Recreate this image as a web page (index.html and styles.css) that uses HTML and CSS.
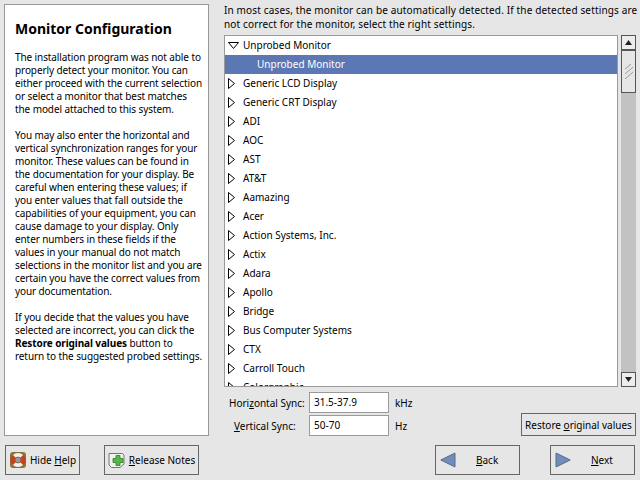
FILE: index.html
```html
<!DOCTYPE html>
<html lang="en">
<head>
<meta charset="utf-8">
<title>Monitor Configuration</title>
<link rel="stylesheet" href="styles.css">
</head>
<body>
<main class="main">
  <aside class="help">
    <h1>Monitor Configuration</h1>
    <p>The installation program was not able to<br>properly detect your monitor. You can<br>either proceed with the current selection<br>or select a monitor that best matches<br>the model attached to this system.</p>
    <p>You may also enter the horizontal and<br>vertical synchronization ranges for your<br>monitor. These values can be found in<br>the documentation for your display. Be<br>careful when entering these values; if<br>you enter values that fall outside the<br>capabilities of your equipment, you can<br>cause damage to your display. Only<br>enter numbers in these fields if the<br>values in your manual do not match<br>selections in the monitor list and you are<br>certain you have the correct values from<br>your documentation.</p>
    <p>If you decide that the values you have<br>selected are incorrect, you can click the<br><b>Restore original values</b> button to<br>return to the suggested probed settings.</p>
  </aside>
  <section class="content">
    <p class="intro">In most cases, the monitor can be automatically detected. If the detected settings are<br>not correct for the monitor, select the right settings.</p>
    <div class="listwrap">
      <ul class="tree">
        <li class="row"><svg class="arrow" viewBox="0 0 11 7"><path d="M.5.500h10L5.500 6.500z"/></svg>Unprobed Monitor</li>
        <li class="row selected">Unprobed Monitor</li>
        <li class="row"><svg class="arrow closed" viewBox="0 0 7 11"><path d="M.5.500v10L6.500 5.500z"/></svg>Generic LCD Display</li>
        <li class="row"><svg class="arrow closed" viewBox="0 0 7 11"><path d="M.5.500v10L6.500 5.500z"/></svg>Generic CRT Display</li>
        <li class="row"><svg class="arrow closed" viewBox="0 0 7 11"><path d="M.5.500v10L6.500 5.500z"/></svg>ADI</li>
        <li class="row"><svg class="arrow closed" viewBox="0 0 7 11"><path d="M.5.500v10L6.500 5.500z"/></svg>AOC</li>
        <li class="row"><svg class="arrow closed" viewBox="0 0 7 11"><path d="M.5.500v10L6.500 5.500z"/></svg>AST</li>
        <li class="row"><svg class="arrow closed" viewBox="0 0 7 11"><path d="M.5.500v10L6.500 5.500z"/></svg>AT&amp;T</li>
        <li class="row"><svg class="arrow closed" viewBox="0 0 7 11"><path d="M.5.500v10L6.500 5.500z"/></svg>Aamazing</li>
        <li class="row"><svg class="arrow closed" viewBox="0 0 7 11"><path d="M.5.500v10L6.500 5.500z"/></svg>Acer</li>
        <li class="row"><svg class="arrow closed" viewBox="0 0 7 11"><path d="M.5.500v10L6.500 5.500z"/></svg>Action Systems, Inc.</li>
        <li class="row"><svg class="arrow closed" viewBox="0 0 7 11"><path d="M.5.500v10L6.500 5.500z"/></svg>Actix</li>
        <li class="row"><svg class="arrow closed" viewBox="0 0 7 11"><path d="M.5.500v10L6.500 5.500z"/></svg>Adara</li>
        <li class="row"><svg class="arrow closed" viewBox="0 0 7 11"><path d="M.5.500v10L6.500 5.500z"/></svg>Apollo</li>
        <li class="row"><svg class="arrow closed" viewBox="0 0 7 11"><path d="M.5.500v10L6.500 5.500z"/></svg>Bridge</li>
        <li class="row"><svg class="arrow closed" viewBox="0 0 7 11"><path d="M.5.500v10L6.500 5.500z"/></svg>Bus Computer Systems</li>
        <li class="row"><svg class="arrow closed" viewBox="0 0 7 11"><path d="M.5.500v10L6.500 5.500z"/></svg>CTX</li>
        <li class="row"><svg class="arrow closed" viewBox="0 0 7 11"><path d="M.5.500v10L6.500 5.500z"/></svg>Carroll Touch</li>
        <li class="row"><svg class="arrow closed" viewBox="0 0 7 11"><path d="M.5.500v10L6.500 5.500z"/></svg>Colorgraphic</li>
      </ul>
      <div class="scrollbar">
        <div class="step"><svg viewBox="0 0 7 5" class="tri"><path d="M3.5 0L7 5H0z"/></svg></div>
        <div class="track">
          <div class="thumb"><svg viewBox="0 0 8 16" class="grip"><path d="M0 5L6 0M0 10L8 3M0 15L8 8"/></svg></div>
        </div>
        <div class="step"><svg viewBox="0 0 7 5" class="tri"><path d="M3.5 5L7 0H0z"/></svg></div>
      </div>
    </div>
    <div class="syncarea">
      <div class="syncgrid">
        <label class="synclabel">Hori<u>z</u>ontal Sync:</label><div class="field">31.5-37.9</div><span class="unit">kHz</span>
        <label class="synclabel vert"><u>V</u>ertical Sync:</label><div class="field">50-70</div><span class="unit">Hz</span>
      </div>
      <button class="btn restore"><span>Restore <u>o</u>riginal values</span></button>
    </div>
  </section>
</main>
<footer class="footer">
  <button class="btn foot hide">
    <svg class="ic" viewBox="0 0 18 18"><rect x="1" y="1" width="16" height="16" rx="3" fill="#8a7a2e"/><circle cx="9" cy="9" r="7.500" fill="#f4f0ea" stroke="#5a3a20" stroke-width=".6"/><path d="M3.700 3.700L6.800 6.800A3.100 3.100 0 0 0 6.800 11.200L3.700 14.300A7.500 7.500 0 0 1 3.700 3.700zM14.300 3.700A7.500 7.500 0 0 1 14.300 14.300L11.200 11.200A3.100 3.100 0 0 0 11.200 6.800z" fill="#c8401c"/><circle cx="9" cy="9" r="3" fill="#9a9a92" stroke="#5a3a20" stroke-width=".6"/></svg>
    <span>Hide <u>H</u>elp</span>
  </button>
  <button class="btn foot notes">
    <svg class="ic" viewBox="0 0 18 18"><path d="M1 2.500h13.500l1.500 1.500V13L12 16.500H3.500L1 14z" fill="#f2f2ec" stroke="#77776f"/><path d="M8 4.500h4v3h3v4h-3v3H8v-3H5v-4h3z" fill="#57b84a" stroke="#2f7f2c" stroke-width=".8"/></svg>
    <span><u>R</u>elease Notes</span>
  </button>
  <div class="spacer"></div>
  <button class="btn nav">
    <svg class="navic" viewBox="0 0 16 16"><path d="M.8 8L15 1V15z" fill="#6f8dbd" stroke="#5a6a84"/></svg>
    <span class="navtxt"><u>B</u>ack</span>
  </button>
  <button class="btn nav next">
    <svg class="navic" viewBox="0 0 16 16"><path d="M15.200 8L1 1V15z" fill="#6f8dbd" stroke="#5a6a84"/></svg>
    <span class="navtxt"><u>N</u>ext</span>
  </button>
</footer>
</body>
</html>
```
FILE: styles.css
```css
* { box-sizing: border-box; }
html, body { margin: 0; padding: 0; }
body {
  width: 640px;
  height: 480px;
  overflow: hidden;
  background: #e6e6e6;
  color: #000;
  font-family: "Noto Sans", sans-serif;
  font-size: 10px;
  display: flex;
  flex-direction: column;
}
.main { display: flex; height: 436px; padding: 4px 4px 0 4px; }
.help {
  width: 205px;
  height: 432px;
  background: #fff;
  border: 1px solid #9a9a9a;
  padding: 15px 0 0 10px;
  white-space: nowrap;
}
.help h1 { margin: 0 0 13px; font-size: 14px; line-height: 18px; font-weight: bold; }
.help p { margin: 0 0 13px; line-height: 13px; letter-spacing: -.1px; }
.content { width: 412px; margin-left: 15px; display: flex; flex-direction: column; }
.intro { margin: -1px 0 0; height: 32px; line-height: 14px; white-space: nowrap; letter-spacing: .15px; }
.listwrap { display: flex; height: 352px; }
.tree {
  width: 394px;
  margin: 0;
  padding: 0;
  list-style: none;
  background: #fff;
  border: 1px solid #9a9a9a;
  overflow: hidden;
}
.row { height: 19px; line-height: 18px; padding: 0 0 1px 3px; display: flex; align-items: center; white-space: nowrap; }
.row.selected { background: #5b78b4; color: #fff; padding-left: 32px; }
.arrow { width: 11px; height: 7px; margin-right: 4px; fill: #fff; stroke: #000; stroke-width: 1; flex: none; }
.arrow.closed { width: 7px; height: 11px; margin-right: 8px; }
.scrollbar {
  width: 15px;
  margin-left: 3px;
  background: #c2c2c2;
  display: flex;
  flex-direction: column;
}
.step {
  height: 15px;
  background: #ececec;
  border: 1px solid #555;
  display: flex;
  align-items: center;
  justify-content: center;
}
.tri { width: 7px; height: 5px; fill: #222; }
.track { flex: 1; }
.thumb {
  height: 43px;
  background: #e6e6e6;
  border: 1px solid #555;
  display: flex;
  align-items: center;
  justify-content: center;
}
.grip { width: 8px; height: 16px; stroke: #999; stroke-width: 1; fill: none; }
.syncarea { flex: 1; display: flex; align-items: flex-end; justify-content: space-between; padding-top: 5px; }
.syncgrid {
  display: grid;
  grid-template-columns: 80px 80px auto;
  grid-template-rows: 21px 21px;
  row-gap: 2px;
  align-items: center;
  align-self: flex-start;
}
.synclabel { padding-left: 5px; white-space: nowrap; }
.synclabel.vert { padding-left: 10px; }
.field {
  height: 21px;
  width: 80px;
  margin-left: 5px;
  background: #fff;
  border: 1px solid #9a9a9a;
  line-height: 19px;
  padding-left: 4px;
}
.unit { margin-left: 11px; }
.btn {
  font: inherit;
  color: #000;
  background: #e6e6e6;
  border: 1px solid #666;
  padding: 0;
  display: flex;
  align-items: center;
  justify-content: center;
  white-space: nowrap;
}
.restore { width: 115px; height: 23px; }
.footer { display: flex; height: 44px; padding: 9px 5px 0 5px; }
.foot { height: 30px; }
.hide { width: 75px; gap: 3px; }
.notes { width: 95px; margin-left: 24px; gap: 3px; }
.ic { width: 18px; height: 18px; flex: none; }
.spacer { flex: 1; }
.nav { width: 85px; height: 30px; justify-content: flex-start; padding-left: 4px; }
.next { margin-left: 30px; }
.navic { width: 16px; height: 16px; flex: none; }
.navtxt { margin-left: 20px; }
```
